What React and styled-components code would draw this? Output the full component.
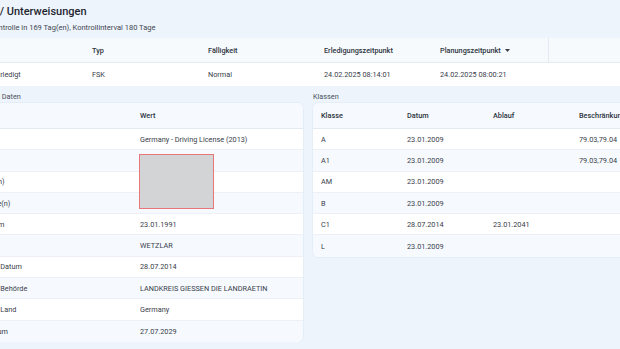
import React from "react";
import styled, { createGlobalStyle } from "styled-components";

const GlobalStyle = createGlobalStyle`
  body {
    margin: 0;
    background: #edf4fc;
    font-family: Roboto, "Liberation Sans", sans-serif;
    color: #333a44;
    overflow: hidden;
  }
`;

const Page = styled.div`
  width: 700px;
  margin-left: -42px;
  padding-top: 4px;
`;

const Header = styled.header`
  padding-left: 2px;
`;

const Title = styled.h1`
  margin: 0;
  padding-left: 3px;
  font-size: 11px;
  font-weight: 500;
  line-height: 16px;
  color: #1f2630;
`;

const Subtitle = styled.div`
  margin-top: 2px;
  font-size: 7.5px;
  line-height: 12px;
  color: #3f4650;
`;

const TopTable = styled.div`
  margin-top: 4px;
  display: grid;
  grid-template-columns: 30px 96px repeat(4, 116px) 1fr;
  background: #fff;
`;

const HeadCell = styled.div`
  height: 25px;
  display: flex;
  align-items: center;
  padding: 0 8px;
  background: #f7fafd;
  border-bottom: 1px solid #e4eaf1;
  font-size: 7.3px;
  font-weight: 500;
  color: #2c333c;
  box-sizing: border-box;
  border-left: ${(p) => (p.divider ? "1px solid #e4eaf1" : "none")};
  gap: 4px;
`;

const BodyCell = styled.div`
  height: ${(p) => p.h || 23}px;
  display: flex;
  align-items: center;
  padding: 0 8px;
  font-size: 7.3px;
  color: #39404a;
  box-sizing: border-box;
  background: ${(p) => (p.alt ? "#f6fafe" : "#fff")};
  border-bottom: ${(p) => (p.last ? "none" : "1px solid #edf1f6")};
  position: relative;
  white-space: nowrap;
`;

const Sections = styled.div`
  margin-top: 4px;
  display: grid;
  grid-template-columns: 345px 345px;
  gap: 10px;
  align-items: start;
`;

const SectionLabel = styled.div`
  font-size: 7.3px;
  line-height: 13px;
  color: #4a515b;
`;

const Card = styled.div`
  background: #fff;
  border-radius: 6px;
  overflow: hidden;
  box-shadow: 0 0 0 1px rgba(40, 70, 110, 0.04);
  display: grid;
  grid-template-columns: ${(p) => p.cols};
`;

const CardHead = styled(HeadCell)`
  height: 26px;
  background: #f6fafe;
`;

const Caret = styled.svg`
  width: 5px;
  height: 3px;
  fill: #3a414a;
`;

const Photo = styled.div`
  position: absolute;
  left: 7px;
  top: 4px;
  width: 75px;
  height: 55px;
  box-sizing: border-box;
  background: #d3d4d6;
  border: 1px solid #e7777a;
  z-index: 2;
`;

const ROW_H = 21.3;

const details = [
  ["Dokument", "Germany - Driving License (2013)"],
  ["Foto", null],
  ["Vorname(n)", ""],
  ["Nachname(n)", ""],
  ["Geb.-Datum", "23.01.1991"],
  ["Geb.-Ort", "WETZLAR"],
  ["Erteilungs Datum", "28.07.2014"],
  ["Erteilende Behörde", "LANDKREIS GIESSEN DIE LANDRAETIN"],
  ["Erteilungs Land", "Germany"],
  ["Ablaufdatum", "27.07.2029"],
];

const classes = [
  ["A", "23.01.2009", "", "79.03,79.04"],
  ["A1", "23.01.2009", "", "79.03,79.04"],
  ["AM", "23.01.2009", "", ""],
  ["B", "23.01.2009", "", ""],
  ["C1", "28.07.2014", "23.01.2041", ""],
  ["L", "23.01.2009", "", ""],
];

export default function App() {
  return (
    <>
      <GlobalStyle />
      <Page>
        <Header>
          <Title>Fristen / Unterweisungen</Title>
          <Subtitle>
            Nächste Kontrolle in 169 Tag(en), Kontrollinterval 180 Tage
          </Subtitle>
        </Header>

        <TopTable>
          <HeadCell />
          <HeadCell />
          <HeadCell>Typ</HeadCell>
          <HeadCell>Fälligkeit</HeadCell>
          <HeadCell>Erledigungszeitpunkt</HeadCell>
          <HeadCell>
            Planungszeitpunkt
            <Caret viewBox="0 0 5 3">
              <path d="M0 0h5L2.5 3z" />
            </Caret>
          </HeadCell>
          <HeadCell divider />
          <BodyCell last />
          <BodyCell last>Erledigt</BodyCell>
          <BodyCell last>FSK</BodyCell>
          <BodyCell last>Normal</BodyCell>
          <BodyCell last>24.02.2025 08:14:01</BodyCell>
          <BodyCell last>24.02.2025 08:00:21</BodyCell>
          <BodyCell last />
        </TopTable>

        <Sections>
          <div>
            <SectionLabel>Führerschein Daten</SectionLabel>
            <Card cols="174px 1fr">
              <CardHead>Feld</CardHead>
              <CardHead>Wert</CardHead>
              {details.map(([label, value], i) => {
                const alt = i % 2 === 1;
                const last = i === details.length - 1;
                return (
                  <React.Fragment key={label}>
                    <BodyCell h={ROW_H} alt={alt} last={last}>
                      {label}
                    </BodyCell>
                    <BodyCell h={ROW_H} alt={alt} last={last}>
                      {value === null ? <Photo /> : value}
                    </BodyCell>
                  </React.Fragment>
                );
              })}
            </Card>
          </div>
          <div>
            <SectionLabel>Klassen</SectionLabel>
            <Card cols="86px 86px 86px 1fr">
              <CardHead>Klasse</CardHead>
              <CardHead>Datum</CardHead>
              <CardHead>Ablauf</CardHead>
              <CardHead>Beschränkung</CardHead>
              {classes.map((row, i) =>
                row.map((cell, j) => (
                  <BodyCell
                    key={`${i}-${j}`}
                    h={ROW_H}
                    alt={i % 2 === 1}
                    last={i === classes.length - 1}
                  >
                    {cell}
                  </BodyCell>
                ))
              )}
            </Card>
          </div>
        </Sections>
      </Page>
    </>
  );
}
